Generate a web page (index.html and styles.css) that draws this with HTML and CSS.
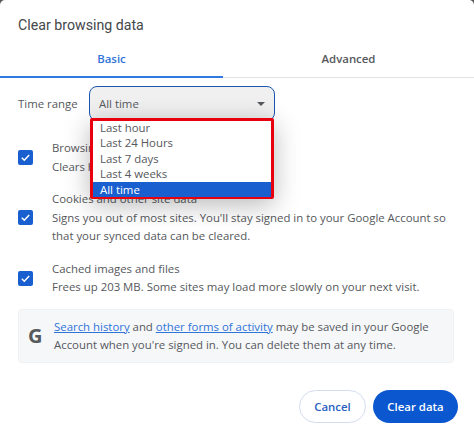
FILE: index.html
```html
<!DOCTYPE html>
<html lang="en">
<head>
    <meta charset="UTF-8">
    <meta name="viewport" content="width=device-width, initial-scale=1.0">
    <title>Clear browsing data</title>
    <link rel="stylesheet" href="styles.css">
</head>
<body>
    <div class="dialog">
        <h1 class="title">Clear browsing data</h1>

        <div class="tabs">
            <div class="tab tab-active">Basic</div>
            <div class="tab tab-second">Advanced</div>
        </div>

        <div class="range-row">
            <span class="range-label">Time range</span>
            <div class="select">
                <span>All time</span>
                <span class="select-arrow"></span>
                <ul class="menu">
                    <li>Last hour</li>
                    <li>Last 24 Hours</li>
                    <li>Last 7 days</li>
                    <li>Last 4 weeks</li>
                    <li class="menu-selected">All time</li>
                </ul>
            </div>
        </div>

        <div class="options">
            <div class="option">
                <span class="checkbox">
                    <svg viewBox="0 0 15 15" width="15" height="15"><path d="M3.8 7.8l2.5 2.4 4.9-5.2" fill="none" stroke="#fff" stroke-width="1.5"/></svg>
                </span>
                <div class="option-text">
                    <p>Browsing history</p>
                    <p>Clears history from all signed-in devices.</p>
                </div>
            </div>
            <div class="option">
                <span class="checkbox">
                    <svg viewBox="0 0 15 15" width="15" height="15"><path d="M3.8 7.8l2.5 2.4 4.9-5.2" fill="none" stroke="#fff" stroke-width="1.5"/></svg>
                </span>
                <div class="option-text">
                    <p>Cookies and other site data</p>
                    <p>Signs you out of most sites. You'll stay signed in to your Google Account so that your synced data can be cleared.</p>
                </div>
            </div>
            <div class="option">
                <span class="checkbox">
                    <svg viewBox="0 0 15 15" width="15" height="15"><path d="M3.8 7.8l2.5 2.4 4.9-5.2" fill="none" stroke="#fff" stroke-width="1.5"/></svg>
                </span>
                <div class="option-text">
                    <p>Cached images and files</p>
                    <p>Frees up 203 MB. Some sites may load more slowly on your next visit.</p>
                </div>
            </div>
        </div>

        <div class="info">
            <span class="info-logo">G</span>
            <p><a href="#">Search history</a> and <a href="#">other forms of activity</a> may be saved in your Google Account when you're signed in. You can delete them at any time.</p>
        </div>

        <div class="actions">
            <button class="btn btn-cancel">Cancel</button>
            <button class="btn btn-primary">Clear data</button>
        </div>
    </div>
</body>
</html>
```

FILE: styles.css
```css
* {
    margin: 0;
    padding: 0;
    box-sizing: border-box;
}

body {
    width: 474px;
    height: 439px;
    overflow: hidden;
    background-color: #555;
    font-family: "Open Sans", "Noto Sans", Arial, sans-serif;
    font-size: 11.4px;
    color: #55585c;
}

.dialog {
    height: 439px;
    background-color: white;
    border-radius: 5px 5px 0 0;
    display: flex;
    flex-direction: column;
}

.title {
    font-family: Roboto, Arial, sans-serif;
    font-size: 14.2px;
    font-weight: 400;
    line-height: 20px;
    color: #44474a;
    padding: 15px 18px 0;
}

.tabs {
    display: flex;
    height: 43px;
    border-bottom: 1px solid #e2e3e5;
}

.tab {
    padding-top: 16px;
    text-align: center;
    font-weight: 600;
    color: #55585c;
}

.tab-active {
    width: 223px;
    color: #2f74d8;
    border-bottom: 2px solid #2f7ae0;
    margin-bottom: -1px;
}

.tab-second {
    flex: 1;
}

.range-row {
    display: flex;
    align-items: center;
    padding: 8px 18px 0;
}

.range-label {
    width: 71px;
}

.select {
    position: relative;
    width: 186px;
    height: 35px;
    padding: 0 9px;
    display: flex;
    align-items: center;
    justify-content: space-between;
    background-color: #f0f0f1;
    border: 1.5px solid #1a56b0;
    border-radius: 8px;
}

.select-arrow {
    width: 0;
    height: 0;
    border-left: 4px solid transparent;
    border-right: 4px solid transparent;
    border-top: 4px solid #55585c;
}

.menu {
    position: absolute;
    z-index: 2;
    top: 31px;
    left: 0;
    width: 184px;
    height: 81px;
    list-style: none;
    background-color: white;
    border: 3px solid #e8000f;
    border-radius: 2px;
    box-shadow: 0 6px 26px rgba(0,0,0,0.28);
}

.menu li {
    height: 15.4px;
    line-height: 15.4px;
    padding-left: 7px;
}

.menu li:first-child {
    margin-top: -1px;
}

.menu .menu-selected {
    background-color: #1a5fd0;
    color: white;
}

.options {
    padding: 0 18px;
}

.option {
    display: flex;
    align-items: center;
    gap: 19px;
    margin-top: 14px;
}

.option:first-child {
    margin-top: 18px;
}

.checkbox {
    flex: none;
    width: 15px;
    height: 15px;
    background-color: #1a5fd0;
    border-radius: 2px;
}

.checkbox svg {
    display: block;
}

.option-text p {
    line-height: 18.5px;
}

.info {
    display: flex;
    align-items: center;
    gap: 10px;
    height: 54px;
    margin: 12px 20px 0 18px;
    padding: 1px 0 0 9px;
    background-color: #f6f7f9;
    border: 1px solid #f0f1f3;
    border-radius: 4px;
    line-height: 18.5px;
}

.info-logo {
    flex: none;
    width: 16px;
    font-size: 20px;
    font-weight: 700;
    color: #55585c;
}

.info a {
    color: #2f74d8;
}

.actions {
    display: flex;
    justify-content: flex-end;
    gap: 7px;
    padding: 27px 16px 0;
}

.btn {
    height: 33px;
    border-radius: 17px;
    font-family: inherit;
    font-size: 11.4px;
    font-weight: 600;
    cursor: pointer;
}

.btn-cancel {
    width: 67px;
    color: #2a5fc0;
    background-color: white;
    border: 1px solid #d3dcf0;
}

.btn-primary {
    width: 85px;
    color: white;
    background-color: #0b57d0;
    border: none;
}
```
